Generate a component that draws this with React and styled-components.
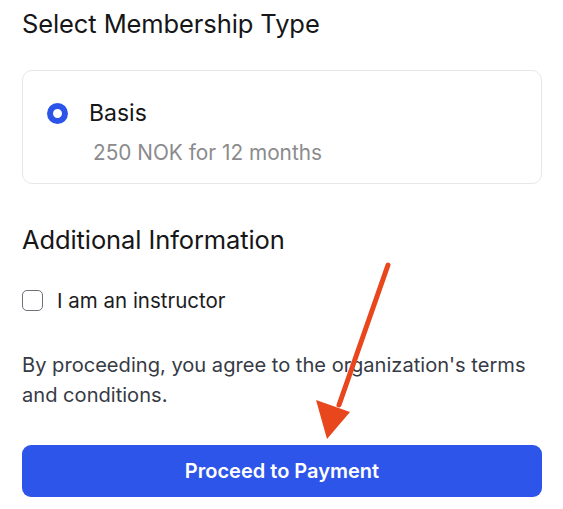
import React from 'react';
import styled, { createGlobalStyle } from 'styled-components';

const GlobalStyle = createGlobalStyle`
  body {
    margin: 0;
    background: #ffffff;
    font-family: Inter, "Liberation Sans", sans-serif;
    color: #1c1c1e;
  }
`;

function App() {
  const [checked, setChecked] = React.useState(false);

  return (
    <Page>
      <GlobalStyle />
      <SectionTitle>Select Membership Type</SectionTitle>
      <OptionCard>
        <OptionRow>
          <Radio aria-checked="true" />
          <OptionName>Basis</OptionName>
        </OptionRow>
        <OptionPrice>250 NOK for 12 months</OptionPrice>
      </OptionCard>

      <SectionTitle $top={40}>Additional Information</SectionTitle>
      <CheckRow>
        <Checkbox
          type="checkbox"
          id="instructor"
          checked={checked}
          onChange={() => setChecked(c => !c)}
        />
        <label htmlFor="instructor">I am an instructor</label>
      </CheckRow>

      <Terms>
        By proceeding, you agree to the organization's terms and conditions.
      </Terms>

      <PayButton>Proceed to Payment</PayButton>

      <Arrow viewBox="0 0 563 509" aria-hidden="true">
        <line x1="388" y1="265" x2="339" y2="405" stroke="#e8461c" strokeWidth="5" strokeLinecap="round" />
        <polygon points="327,439 316,400 350,412" fill="#e8461c" />
      </Arrow>
    </Page>
  );
}

const Page = styled.div`
  position: relative;
  width: 520px;
  padding: 8px 21px 12px 22px;
`;

const SectionTitle = styled.h2`
  margin: ${props => props.$top || 0}px 0 0;
  font-size: 25.5px;
  font-weight: 400;
  line-height: 32px;
  letter-spacing: -0.1px;
  color: #161618;
`;

const OptionCard = styled.div`
  margin-top: 30px;
  border: 1px solid #e6e7ea;
  border-radius: 10px;
  padding: 28px 24px 17px 24px;
  display: flex;
  flex-direction: column;
  gap: 13px;
`;

const OptionRow = styled.div`
  display: flex;
  align-items: center;
  gap: 21px;
  height: 28px;
`;

const Radio = styled.span`
  width: 21px;
  height: 21px;
  box-sizing: border-box;
  border-radius: 50%;
  border: 6.5px solid #2d54e9;
  background: #ffffff;
`;

const OptionName = styled.span`
  font-size: 23px;
  line-height: 28px;
  color: #161618;
`;

const OptionPrice = styled.span`
  padding-left: 46px;
  font-size: 20.8px;
  line-height: 26px;
  color: #8b8b8e;
`;

const CheckRow = styled.div`
  margin-top: 30px;
  display: flex;
  align-items: center;
  gap: 14px;
  height: 28px;
  font-size: 20.5px;
  color: #1c1c1e;
`;

const Checkbox = styled.input`
  appearance: none;
  margin: 0;
  width: 21px;
  height: 21px;
  border: 1.5px solid #6f7178;
  border-radius: 5px;
  background: #ffffff;
`;

const Terms = styled.p`
  margin: 36px 0 0;
  font-size: 20.1px;
  line-height: 30px;
  color: #363a45;
`;

const PayButton = styled.button`
  display: block;
  margin-top: 35px;
  width: 100%;
  height: 52px;
  border: none;
  border-radius: 9px;
  background: #2d55e9;
  color: #ffffff;
  font-family: Inter, "Liberation Sans", sans-serif;
  font-size: 20px;
  font-weight: 600;
`;

const Arrow = styled.svg`
  position: absolute;
  left: 0;
  top: 0;
  width: 563px;
  height: 509px;
  pointer-events: none;
`;

export default App;
